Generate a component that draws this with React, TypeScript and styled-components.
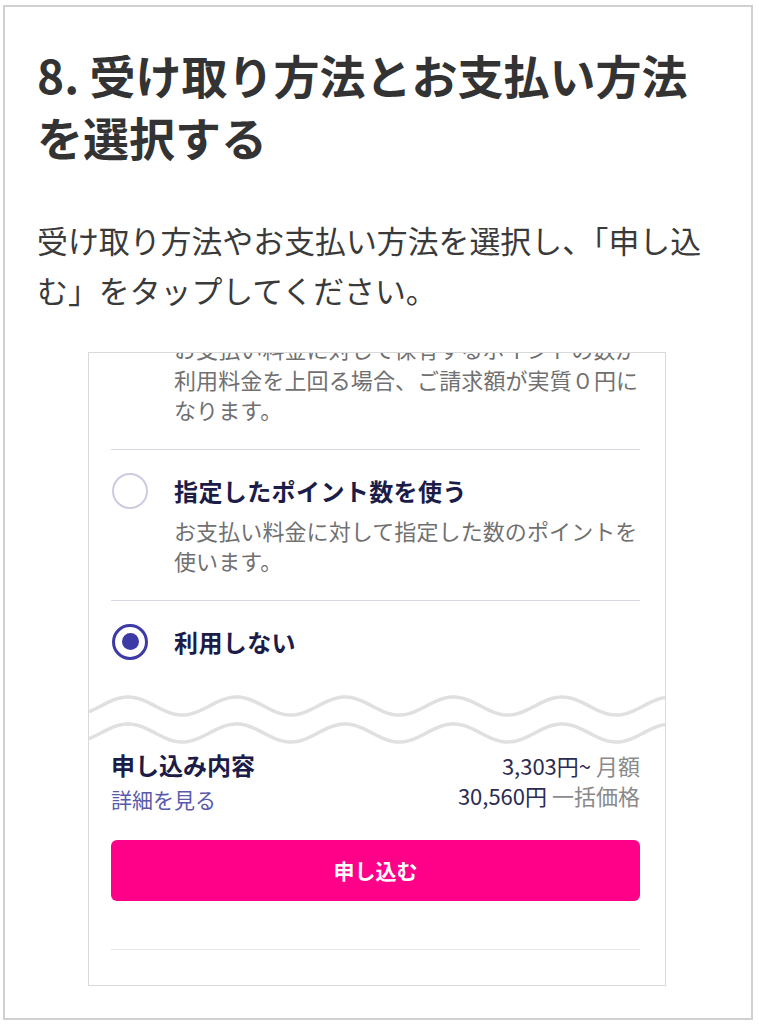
import React from 'react';
import styled, { createGlobalStyle } from 'styled-components';

const FONT = "'Noto Sans CJK JP', 'Noto Sans', sans-serif";

const GlobalStyle = createGlobalStyle`
  html, body {
    margin: 0;
    padding: 0;
    background: #ffffff;
  }
  * {
    box-sizing: border-box;
  }
`;

const WAVE_WIDTH = 576;
const WAVE_HEIGHT = 61;

// sine wave path for the "cut" decoration between the options and the summary
const wavePath = (cy: number) => {
  let d = '';
  for (let x = 0; x <= WAVE_WIDTH; x += 2) {
    const y = cy - 9 * Math.cos((2 * Math.PI * (x - 39)) / 108.5);
    d += `${x === 0 ? 'M' : 'L'}${x} ${y.toFixed(2)} `;
  }
  return d;
};

const App: React.FC = () => (
  <>
    <GlobalStyle />
    <Page>
      <Frame>
        <Title>8. 受け取り方法とお支払い方法を選択する</Title>
        <Lead>受け取り方法やお支払い方法を選択し、「申し込む」をタップしてください。</Lead>

        <Shot>
          <Options>
            <Option $top={0}>
              <Description $clipTop>
                お支払い料金に対して保有するポイントの数が利用料金を上回る場合、ご請求額が実質０円になります。
              </Description>
            </Option>

            <Option $top={24}>
              <OptionHead>
                <Radio $checked={false} />
                <OptionLabel>指定したポイント数を使う</OptionLabel>
              </OptionHead>
              <Description>お支払い料金に対して指定した数のポイントを使います。</Description>
            </Option>

            <Option $top={24} $last>
              <OptionHead>
                <Radio $checked />
                <OptionLabel>利用しない</OptionLabel>
              </OptionHead>
            </Option>
          </Options>

          <Wave viewBox={`0 0 ${WAVE_WIDTH} ${WAVE_HEIGHT}`} aria-hidden="true">
            <path d={wavePath(19)} />
            <path d={wavePath(46)} />
          </Wave>

          <Summary>
            <SummaryRow>
              <SummaryLeft>
                <SummaryTitle>申し込み内容</SummaryTitle>
                <DetailLink>詳細を見る</DetailLink>
              </SummaryLeft>
              <Prices>
                <PriceLine>
                  3,303円~ <PriceNote>月額</PriceNote>
                </PriceLine>
                <PriceLine>
                  30,560円 <PriceNote>一括価格</PriceNote>
                </PriceLine>
              </Prices>
            </SummaryRow>
            <ApplyButton>申し込む</ApplyButton>
            <Divider />
          </Summary>
        </Shot>
      </Frame>
    </Page>
  </>
);

const Page = styled.div`
  padding: 5px 6px 5px 3px;
  font-family: ${FONT};
`;

const Frame = styled.div`
  width: 750px;
  border: 2px solid #d0d0d0;
  padding: 36px 24px 32px 32px;
`;

const Title = styled.h1`
  margin: 0;
  font-size: 46px;
  line-height: 62px;
  font-weight: 700;
  color: #333333;
`;

const Lead = styled.p`
  margin: 48px 0 0;
  font-size: 30.9px;
  line-height: 50px;
  font-weight: 400;
  color: #3a3a3a;
`;

const Shot = styled.div`
  width: 578px;
  margin: 37px 0 0 51px;
  border: 1px solid #d9d9d9;
  overflow: hidden;
  display: flex;
  flex-direction: column;
  background: #ffffff;
`;

const Options = styled.div`
  padding: 0 25px 0 22px;
  display: flex;
  flex-direction: column;
`;

const Option = styled.div<{ $top: number; $last?: boolean }>`
  padding: ${(p) => p.$top}px 0 24px;
  border-bottom: ${(p) => (p.$last ? 'none' : '1px solid #d8d8e6')};
`;

const OptionHead = styled.div`
  display: flex;
  align-items: center;
  gap: 26px;
  height: 34px;
`;

const Radio = styled.span<{ $checked: boolean }>`
  flex-shrink: 0;
  position: relative;
  width: 36px;
  height: 36px;
  margin-left: 1px;
  border-radius: 50%;
  border: ${(p) => (p.$checked ? '3px solid #3d3aa6' : '2px solid #cdcbe0')};

  &::after {
    content: '';
    display: ${(p) => (p.$checked ? 'block' : 'none')};
    position: absolute;
    left: 50%;
    top: 50%;
    width: 17px;
    height: 17px;
    margin: -8.5px 0 0 -8.5px;
    border-radius: 50%;
    background: #3d3aa6;
  }
`;

const OptionLabel = styled.span`
  font-size: 24px;
  font-weight: 700;
  color: #1c1c48;
  letter-spacing: 0.4px;
`;

const Description = styled.p<{ $clipTop?: boolean }>`
  margin: ${(p) => (p.$clipTop ? '-20px' : '7px')} 0 0 63px;
  font-size: 22px;
  line-height: 30.5px;
  color: #707070;
  letter-spacing: 0.1px;
`;

const Wave = styled.svg`
  display: block;
  width: ${WAVE_WIDTH}px;
  height: ${WAVE_HEIGHT}px;
  margin-top: 4px;
  fill: none;
  stroke: #e0e0e0;
  stroke-width: 3.5;
`;

const Summary = styled.div`
  padding: 0 25px 35px 22px;
  display: flex;
  flex-direction: column;
`;

const SummaryRow = styled.div`
  display: flex;
  justify-content: space-between;
  align-items: flex-start;
`;

const SummaryLeft = styled.div`
  display: flex;
  flex-direction: column;
`;

const SummaryTitle = styled.span`
  font-size: 24px;
  line-height: 34px;
  font-weight: 700;
  color: #1c1c48;
`;

const DetailLink = styled.a`
  font-size: 21px;
  line-height: 34px;
  color: #5a5aac;
  text-decoration: none;
`;

const Prices = styled.div`
  padding-top: 2px;
  display: flex;
  flex-direction: column;
  align-items: flex-end;
`;

const PriceLine = styled.span`
  font-size: 22px;
  line-height: 30px;
  color: #2c2c52;
`;

const PriceNote = styled.span`
  color: #8a8a8a;
`;

const ApplyButton = styled.button`
  margin-top: 24px;
  height: 61px;
  width: 100%;
  border: none;
  border-radius: 6px;
  background: #ff0088;
  color: #ffffff;
  font-family: ${FONT};
  font-size: 21px;
  font-weight: 700;
  cursor: pointer;
`;

const Divider = styled.div`
  margin-top: 48px;
  height: 1px;
  background: #e6e6ee;
`;

export default App;
